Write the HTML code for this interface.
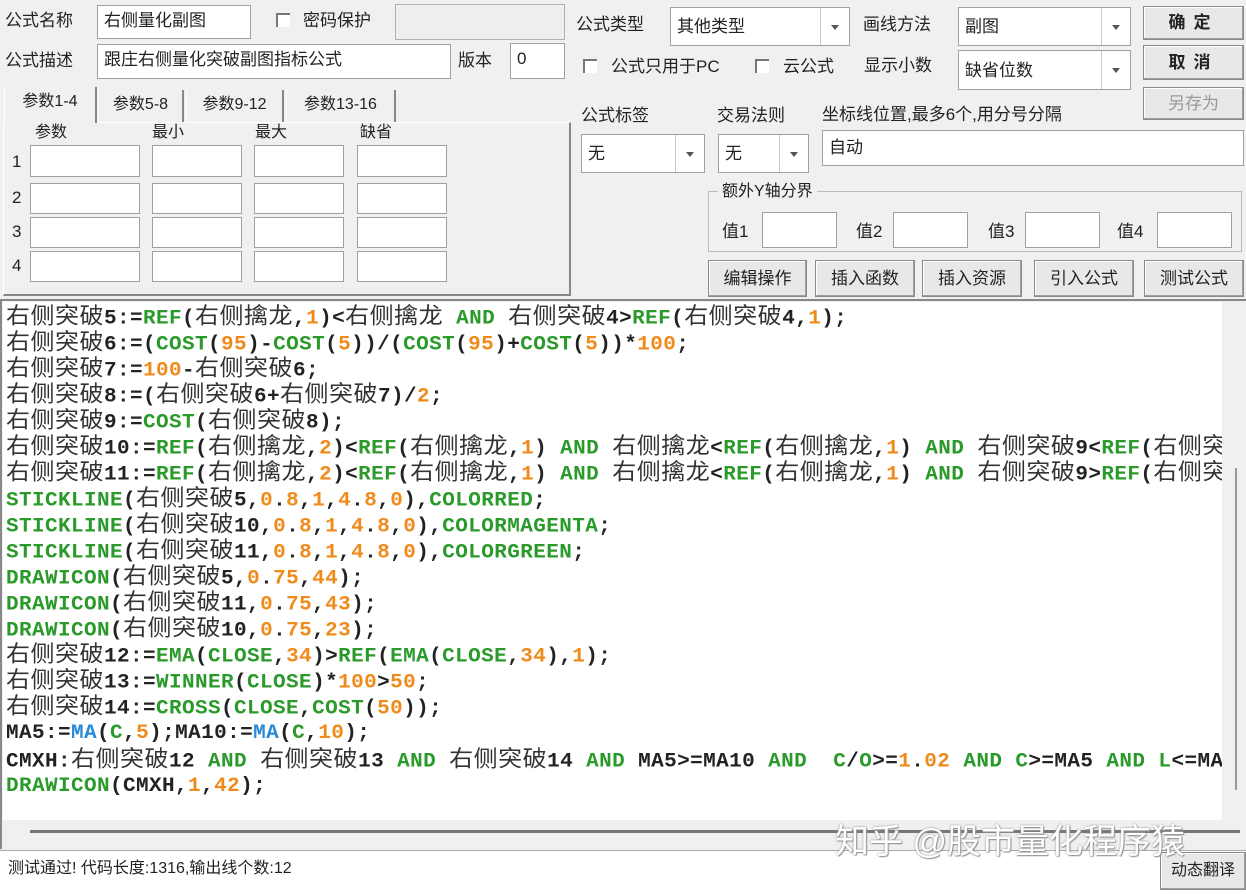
<!DOCTYPE html>
<html><head><meta charset="utf-8"><style>
body{margin:0;width:1246px;height:893px;background:#f0f0f0;position:relative;overflow:hidden;font-family:"Liberation Sans","Noto Sans CJK SC",sans-serif;color:#222}
.a{position:absolute}
.l{position:absolute;font-size:17px;line-height:22px;white-space:nowrap}
.in{position:absolute;background:#fff;border:1px solid #a0a0a0;box-sizing:border-box;font-size:17px;line-height:30px;padding-left:6px;white-space:nowrap}
.sel .dd{position:absolute;right:0;top:0;bottom:0;width:28px;border-left:1px solid #c8c8c8}
.sel .dd:after{content:"";position:absolute;left:10px;top:50%;margin-top:-2px;border:4px solid transparent;border-top:5px solid #555}
.cb{position:absolute;width:14px;height:14px;background:#fff;border-left:2px solid #777;border-top:2px solid #777;box-sizing:border-box}
.btn{position:absolute;background:#e8e8e8;border:1px solid #8a8a8a;box-shadow:inset -1px -1px 0 #a0a0a0,inset 1px 1px 0 #fff;box-sizing:border-box;text-align:center;font-size:17px;white-space:nowrap}
.tab{position:absolute;top:90px;height:32px;font-size:16px;line-height:30px;text-align:center;border-right:2px solid #888;border-left:1px solid #fff;box-sizing:border-box}
#code{position:absolute;left:3px;top:302px;width:1219px;height:518px;background:#fff;overflow:hidden}
.ln{position:absolute;left:3px;height:26px;line-height:26px;white-space:pre;font-family:"Liberation Mono",monospace;font-weight:bold;font-size:21px;letter-spacing:0.4px;color:#222;transform:scaleY(0.95)}
.k{font-family:"Noto Sans CJK SC",sans-serif;font-weight:normal;font-size:24px;line-height:18px;letter-spacing:0.5px;color:#333}
.g{color:#2a9a2a}.o{color:#f08a1a}.b{color:#2a8ad8}
</style></head><body>
<div class="l" style="left:5px;top:10px">公式名称</div>
<div class="in" style="left:97px;top:5px;width:154px;height:34px">右侧量化副图</div>
<div class="cb" style="left:276px;top:13px"></div>
<div class="l" style="left:303px;top:10px">密码保护</div>
<div class="a" style="left:395px;top:4px;width:170px;height:36px;border:1px solid #b0b0b0;background:#eee;box-sizing:border-box"></div>
<div class="l" style="left:5px;top:50px">公式描述</div>
<div class="in" style="left:97px;top:44px;width:354px;height:35px">跟庄右侧量化突破副图指标公式</div>
<div class="l" style="left:458px;top:50px">版本</div>
<div class="in" style="left:510px;top:43px;width:55px;height:36px">0</div>
<div class="a" style="left:3px;top:122px;width:568px;height:174px;border-top:1px solid #fff;border-left:1px solid #fff;border-right:2px solid #888;border-bottom:2px solid #888;box-sizing:border-box"></div>
<div class="tab" style="left:4px;top:87px;height:36px;width:93px;background:#f0f0f0">参数1-4</div>
<div class="tab" style="left:98px;width:86px">参数5-8</div>
<div class="tab" style="left:186px;width:98px">参数9-12</div>
<div class="tab" style="left:286px;width:110px">参数13-16</div>
<div class="l" style="left:35px;top:122px;font-size:16px">参数</div>
<div class="l" style="left:152px;top:122px;font-size:16px">最小</div>
<div class="l" style="left:255px;top:122px;font-size:16px">最大</div>
<div class="l" style="left:360px;top:122px;font-size:16px">缺省</div>
<div class="l" style="left:12px;top:151px">1</div><div class="l" style="left:12px;top:187px">2</div><div class="l" style="left:12px;top:221px">3</div><div class="l" style="left:12px;top:255px">4</div>
<div class="in" style="left:30px;top:145px;width:110px;height:32px"></div><div class="in" style="left:152px;top:145px;width:90px;height:32px"></div><div class="in" style="left:254px;top:145px;width:90px;height:32px"></div><div class="in" style="left:357px;top:145px;width:90px;height:32px"></div>
<div class="in" style="left:30px;top:183px;width:110px;height:31px"></div><div class="in" style="left:152px;top:183px;width:90px;height:31px"></div><div class="in" style="left:254px;top:183px;width:90px;height:31px"></div><div class="in" style="left:357px;top:183px;width:90px;height:31px"></div>
<div class="in" style="left:30px;top:217px;width:110px;height:31px"></div><div class="in" style="left:152px;top:217px;width:90px;height:31px"></div><div class="in" style="left:254px;top:217px;width:90px;height:31px"></div><div class="in" style="left:357px;top:217px;width:90px;height:31px"></div>
<div class="in" style="left:30px;top:251px;width:110px;height:31px"></div><div class="in" style="left:152px;top:251px;width:90px;height:31px"></div><div class="in" style="left:254px;top:251px;width:90px;height:31px"></div><div class="in" style="left:357px;top:251px;width:90px;height:31px"></div>
<div class="l" style="left:576px;top:14px">公式类型</div>
<div class="in sel" style="left:670px;top:7px;width:180px;height:39px;line-height:37px">其他类型<div class="dd"></div></div>
<div class="l" style="left:863px;top:14px">画线方法</div>
<div class="in sel" style="left:958px;top:7px;width:173px;height:39px;line-height:37px">副图<div class="dd"></div></div>
<div class="btn" style="left:1143px;top:6px;width:101px;height:34px;line-height:32px;font-weight:bold;letter-spacing:8px">确定</div>
<div class="btn" style="left:1143px;top:45px;width:101px;height:35px;line-height:33px;font-weight:bold;letter-spacing:8px">取消</div>
<div class="btn" style="left:1143px;top:87px;width:101px;height:33px;line-height:31px;color:#999">另存为</div>
<div class="cb" style="left:583px;top:59px"></div>
<div class="l" style="left:611px;top:56px">公式只用于PC</div>
<div class="cb" style="left:755px;top:59px"></div>
<div class="l" style="left:783px;top:56px">云公式</div>
<div class="l" style="left:864px;top:55px">显示小数</div>
<div class="in sel" style="left:958px;top:50px;width:173px;height:40px;line-height:40px">缺省位数<div class="dd"></div></div>
<div class="l" style="left:581px;top:105px">公式标签</div>
<div class="l" style="left:717px;top:105px">交易法则</div>
<div class="l" style="left:822px;top:104px">坐标线位置,最多6个,用分号分隔</div>
<div class="in sel" style="left:581px;top:134px;width:124px;height:39px;line-height:37px">无<div class="dd"></div></div>
<div class="in sel" style="left:718px;top:134px;width:91px;height:39px;line-height:37px">无<div class="dd"></div></div>
<div class="in" style="left:822px;top:130px;width:422px;height:36px;line-height:34px">自动</div>
<div class="a" style="left:708px;top:191px;width:534px;height:61px;border:1px solid #bbb;box-sizing:border-box"></div>
<div class="l" style="left:718px;top:181px;background:#f0f0f0;padding:0 4px;font-size:16px">额外Y轴分界</div>
<div class="l" style="left:722px;top:221px">值1</div><div class="in" style="left:762px;top:212px;width:75px;height:36px"></div>
<div class="l" style="left:856px;top:221px">值2</div><div class="in" style="left:893px;top:212px;width:75px;height:36px"></div>
<div class="l" style="left:988px;top:221px">值3</div><div class="in" style="left:1025px;top:212px;width:75px;height:36px"></div>
<div class="l" style="left:1117px;top:221px">值4</div><div class="in" style="left:1157px;top:212px;width:75px;height:36px"></div>
<div class="btn" style="left:708px;top:260px;width:99px;height:37px;line-height:35px">编辑操作</div>
<div class="btn" style="left:815px;top:260px;width:100px;height:37px;line-height:35px">插入函数</div>
<div class="btn" style="left:922px;top:260px;width:100px;height:37px;line-height:35px">插入资源</div>
<div class="btn" style="left:1034px;top:260px;width:100px;height:37px;line-height:35px">引入公式</div>
<div class="btn" style="left:1144px;top:260px;width:100px;height:37px;line-height:35px">测试公式</div>
<div class="a" style="left:0;top:299px;width:1246px;height:550px;border-top:2px solid #888;border-left:2px solid #888;box-sizing:border-box"></div>
<div class="a" style="left:1235px;top:468px;width:2px;height:322px;background:#999"></div>
<div class="a" style="left:30px;top:830px;width:1210px;height:3px;background:#777"></div>
<div id="code">
<div class="ln" style="top:3px"><span class="k">右侧突破</span>5:=<span class="g">REF</span>(<span class="k">右侧擒龙</span>,<span class="o">1</span>)&lt;<span class="k">右侧擒龙</span> <span class="g">AND</span> <span class="k">右侧突破</span>4&gt;<span class="g">REF</span>(<span class="k">右侧突破</span>4,<span class="o">1</span>);</div>
<div class="ln" style="top:29px"><span class="k">右侧突破</span>6:=(<span class="g">COST</span>(<span class="o">95</span>)-<span class="g">COST</span>(<span class="o">5</span>))/(<span class="g">COST</span>(<span class="o">95</span>)+<span class="g">COST</span>(<span class="o">5</span>))*<span class="o">100</span>;</div>
<div class="ln" style="top:55px"><span class="k">右侧突破</span>7:=<span class="o">100</span>-<span class="k">右侧突破</span>6;</div>
<div class="ln" style="top:81px"><span class="k">右侧突破</span>8:=(<span class="k">右侧突破</span>6+<span class="k">右侧突破</span>7)/<span class="o">2</span>;</div>
<div class="ln" style="top:107px"><span class="k">右侧突破</span>9:=<span class="g">COST</span>(<span class="k">右侧突破</span>8);</div>
<div class="ln" style="top:133px"><span class="k">右侧突破</span>10:=<span class="g">REF</span>(<span class="k">右侧擒龙</span>,<span class="o">2</span>)&lt;<span class="g">REF</span>(<span class="k">右侧擒龙</span>,<span class="o">1</span>) <span class="g">AND</span> <span class="k">右侧擒龙</span>&lt;<span class="g">REF</span>(<span class="k">右侧擒龙</span>,<span class="o">1</span>) <span class="g">AND</span> <span class="k">右侧突破</span>9&lt;<span class="g">REF</span>(<span class="k">右侧突破</span>9,<span class="o">1</span>);</div>
<div class="ln" style="top:159px"><span class="k">右侧突破</span>11:=<span class="g">REF</span>(<span class="k">右侧擒龙</span>,<span class="o">2</span>)&lt;<span class="g">REF</span>(<span class="k">右侧擒龙</span>,<span class="o">1</span>) <span class="g">AND</span> <span class="k">右侧擒龙</span>&lt;<span class="g">REF</span>(<span class="k">右侧擒龙</span>,<span class="o">1</span>) <span class="g">AND</span> <span class="k">右侧突破</span>9&gt;<span class="g">REF</span>(<span class="k">右侧突破</span>9,<span class="o">1</span>);</div>
<div class="ln" style="top:185px"><span class="g">STICKLINE</span>(<span class="k">右侧突破</span>5,<span class="o">0</span>.<span class="o">8</span>,<span class="o">1</span>,<span class="o">4</span>.<span class="o">8</span>,<span class="o">0</span>),<span class="g">COLORRED</span>;</div>
<div class="ln" style="top:211px"><span class="g">STICKLINE</span>(<span class="k">右侧突破</span>10,<span class="o">0</span>.<span class="o">8</span>,<span class="o">1</span>,<span class="o">4</span>.<span class="o">8</span>,<span class="o">0</span>),<span class="g">COLORMAGENTA</span>;</div>
<div class="ln" style="top:237px"><span class="g">STICKLINE</span>(<span class="k">右侧突破</span>11,<span class="o">0</span>.<span class="o">8</span>,<span class="o">1</span>,<span class="o">4</span>.<span class="o">8</span>,<span class="o">0</span>),<span class="g">COLORGREEN</span>;</div>
<div class="ln" style="top:263px"><span class="g">DRAWICON</span>(<span class="k">右侧突破</span>5,<span class="o">0</span>.<span class="o">75</span>,<span class="o">44</span>);</div>
<div class="ln" style="top:289px"><span class="g">DRAWICON</span>(<span class="k">右侧突破</span>11,<span class="o">0</span>.<span class="o">75</span>,<span class="o">43</span>);</div>
<div class="ln" style="top:315px"><span class="g">DRAWICON</span>(<span class="k">右侧突破</span>10,<span class="o">0</span>.<span class="o">75</span>,<span class="o">23</span>);</div>
<div class="ln" style="top:341px"><span class="k">右侧突破</span>12:=<span class="g">EMA</span>(<span class="g">CLOSE</span>,<span class="o">34</span>)&gt;<span class="g">REF</span>(<span class="g">EMA</span>(<span class="g">CLOSE</span>,<span class="o">34</span>),<span class="o">1</span>);</div>
<div class="ln" style="top:367px"><span class="k">右侧突破</span>13:=<span class="g">WINNER</span>(<span class="g">CLOSE</span>)*<span class="o">100</span>&gt;<span class="o">50</span>;</div>
<div class="ln" style="top:393px"><span class="k">右侧突破</span>14:=<span class="g">CROSS</span>(<span class="g">CLOSE</span>,<span class="g">COST</span>(<span class="o">50</span>));</div>
<div class="ln" style="top:419px">MA5:=<span class="b">MA</span>(<span class="g">C</span>,<span class="o">5</span>);MA10:=<span class="b">MA</span>(<span class="g">C</span>,<span class="o">10</span>);</div>
<div class="ln" style="top:446px">CMXH:<span class="k">右侧突破</span>12 <span class="g">AND</span> <span class="k">右侧突破</span>13 <span class="g">AND</span> <span class="k">右侧突破</span>14 <span class="g">AND</span> MA5&gt;=MA10 <span class="g">AND</span>  <span class="g">C</span>/<span class="g">O</span>&gt;=<span class="o">1</span>.<span class="o">02</span> <span class="g">AND</span> <span class="g">C</span>&gt;=MA5 <span class="g">AND</span> <span class="g">L</span>&lt;=MA5;</div>
<div class="ln" style="top:472px"><span class="g">DRAWICON</span>(CMXH,<span class="o">1</span>,<span class="o">42</span>);</div>
</div>
<div class="a" style="left:0;top:850px;width:1246px;height:43px;background:#fff;border-top:1px solid #aaa"></div>
<div class="l" style="left:8px;top:858px;font-size:16px">测试通过! 代码长度:1316,输出线个数:12</div>
<div class="btn" style="left:1160px;top:852px;width:86px;height:38px;line-height:36px;font-size:16px">动态翻译</div>
<div class="a" style="left:835px;top:818px;font-size:34px;line-height:48px;color:#fff;text-shadow:0 0 2px #888,1px 1px 1px #999;white-space:nowrap">知乎 @股市量化程序猿</div>
</body></html>
